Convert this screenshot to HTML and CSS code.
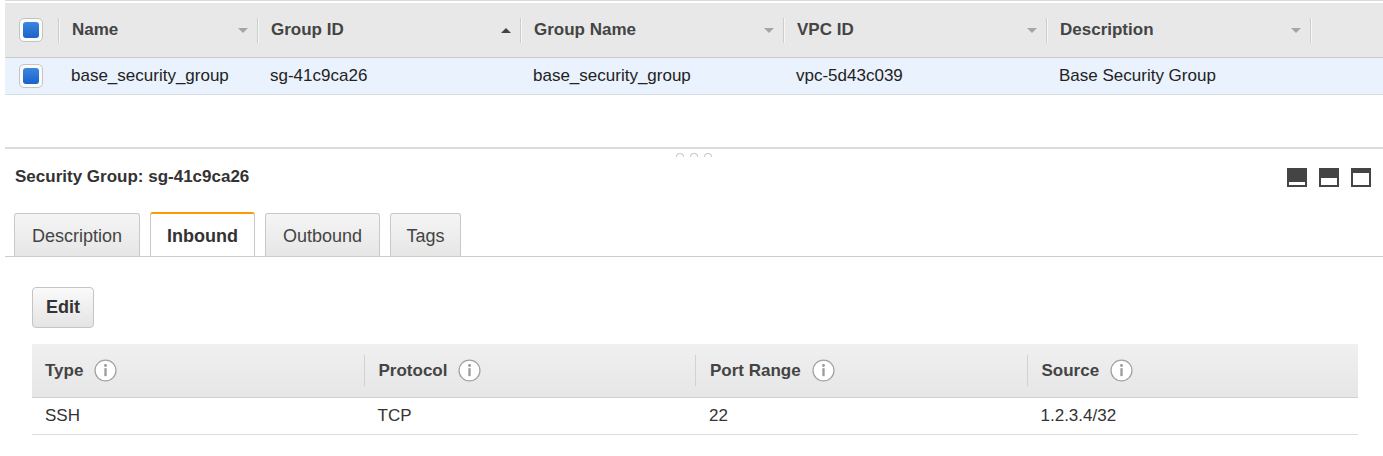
FILE: index.html
```html
<!DOCTYPE html>
<html lang="en">
<head>
    <meta charset="UTF-8">
    <title>Security Groups</title>
    <link rel="stylesheet" href="styles.css">
</head>
<body>
<div class="page">
    <div class="list">
        <div class="list-head">
            <div class="cell-check"><span class="check"><span class="check-in"></span></span></div>
            <div class="hcell"><div class="hcell-in"><span>Name</span><span class="arr-down"></span></div></div>
            <div class="hcell"><div class="hcell-in"><span>Group ID</span><span class="arr-up"></span></div></div>
            <div class="hcell"><div class="hcell-in"><span>Group Name</span><span class="arr-down"></span></div></div>
            <div class="hcell"><div class="hcell-in"><span>VPC ID</span><span class="arr-down"></span></div></div>
            <div class="hcell"><div class="hcell-in"><span>Description</span><span class="arr-down"></span></div></div>
            <div class="hcell"><div class="hcell-in"></div></div>
        </div>
        <div class="list-row">
            <div class="cell-check"><span class="check"><span class="check-in"></span></span></div>
            <div class="rcell">base_security_group</div>
            <div class="rcell">sg-41c9ca26</div>
            <div class="rcell">base_security_group</div>
            <div class="rcell">vpc-5d43c039</div>
            <div class="rcell">Base Security Group</div>
            <div class="rcell"></div>
        </div>
    </div>

    <div class="splitter">
        <span class="dot"></span><span class="dot"></span><span class="dot"></span>
    </div>

    <div class="pane-head">
        <span class="pane-title">Security Group: sg-41c9ca26</span>
        <div class="pane-icons">
            <svg width="20" height="19" viewBox="0 0 20 19"><rect width="20" height="19" fill="#444"/><rect x="2" y="14" width="16" height="3" fill="#fff"/></svg>
            <svg width="20" height="19" viewBox="0 0 20 19"><rect width="20" height="19" fill="#444"/><rect x="2" y="10" width="16" height="7" fill="#fff"/></svg>
            <svg width="20" height="19" viewBox="0 0 20 19"><rect width="20" height="19" fill="#444"/><rect x="2" y="5" width="16" height="12" fill="#fff"/></svg>
        </div>
    </div>

    <div class="tabs">
        <div class="tab tab-desc">Description</div>
        <div class="tab tab-in active">Inbound</div>
        <div class="tab tab-out">Outbound</div>
        <div class="tab tab-tags">Tags</div>
    </div>

    <div class="inbound">
        <button class="btn-edit">Edit</button>
        <table class="rules">
            <thead>
                <tr>
                    <th><div class="th-in first">Type <svg class="info" width="23" height="23" viewBox="0 0 22 22"><circle cx="11" cy="11" r="10" fill="#fff" stroke="#a3a3a3" stroke-width="1.2"/><circle cx="11" cy="6.3" r="1.4" fill="#9a9a9a"/><rect x="9.9" y="8.8" width="2.2" height="7.6" fill="#9a9a9a"/></svg></div></th>
                    <th><div class="th-in">Protocol <svg class="info" width="23" height="23" viewBox="0 0 22 22"><circle cx="11" cy="11" r="10" fill="#fff" stroke="#a3a3a3" stroke-width="1.2"/><circle cx="11" cy="6.3" r="1.4" fill="#9a9a9a"/><rect x="9.9" y="8.8" width="2.2" height="7.6" fill="#9a9a9a"/></svg></div></th>
                    <th><div class="th-in">Port Range <svg class="info" width="23" height="23" viewBox="0 0 22 22"><circle cx="11" cy="11" r="10" fill="#fff" stroke="#a3a3a3" stroke-width="1.2"/><circle cx="11" cy="6.3" r="1.4" fill="#9a9a9a"/><rect x="9.9" y="8.8" width="2.2" height="7.6" fill="#9a9a9a"/></svg></div></th>
                    <th><div class="th-in">Source <svg class="info" width="23" height="23" viewBox="0 0 22 22"><circle cx="11" cy="11" r="10" fill="#fff" stroke="#a3a3a3" stroke-width="1.2"/><circle cx="11" cy="6.3" r="1.4" fill="#9a9a9a"/><rect x="9.9" y="8.8" width="2.2" height="7.6" fill="#9a9a9a"/></svg></div></th>
                </tr>
            </thead>
            <tbody>
                <tr>
                    <td>SSH</td>
                    <td>TCP</td>
                    <td>22</td>
                    <td>1.2.3.4/32</td>
                </tr>
            </tbody>
        </table>
    </div>
</div>
</body>
</html>
```

FILE: styles.css
```css
body {
    margin: 0;
    font-family: "Liberation Sans", Arial, sans-serif;
    font-size: 17px;
    color: #222;
    background: #fff;
}
.page {
    padding-left: 5px;
}

/* top list */
.list {
    border-top: 1px solid #dadada;
    padding-top: 2px;
}
.list-head,
.list-row {
    display: grid;
    grid-template-columns: 53px 199px 263px 263px 263px 264px 1fr;
}
.list-head {
    height: 54px;
    background: #e8e8e8;
    border-bottom: 1px solid #cacaca;
}
.list-row {
    height: 36px;
    background: #eaf2fd;
    border-bottom: 1px solid #d9dee6;
}
.cell-check {
    display: flex;
    align-items: center;
    padding-left: 14px;
}
.check {
    width: 22px;
    height: 22px;
    border: 1px solid #c4c4c4;
    border-radius: 5px;
    background: #fafafa;
    display: flex;
    align-items: center;
    justify-content: center;
}
.check-in {
    width: 16px;
    height: 16px;
    border-radius: 3px;
    background: linear-gradient(#3a86e0, #1b62c9);
}
.hcell {
    display: flex;
    align-items: center;
}
.hcell-in {
    flex: 1;
    height: 25px;
    border-left: 1px solid #cdcdcd;
    box-shadow: inset 1px 0 0 #f6f6f6;
    display: flex;
    align-items: center;
    justify-content: space-between;
    padding: 0 9px 0 13px;
    font-weight: bold;
    color: #444;
}
.arr-down {
    width: 0;
    height: 0;
    border-left: 5px solid transparent;
    border-right: 5px solid transparent;
    border-top: 5px solid #a5a5a5;
}
.arr-up {
    width: 0;
    height: 0;
    border-left: 5px solid transparent;
    border-right: 5px solid transparent;
    border-bottom: 5px solid #444;
}
.rcell {
    display: flex;
    align-items: center;
    padding-left: 13px;
    color: #222;
}

/* split handle */
.splitter {
    margin-top: 52px;
    border-top: 2px solid #dcdcdc;
    height: 15px;
    display: flex;
    justify-content: center;
    gap: 6px;
    padding-top: 4px;
    box-sizing: border-box;
}
.dot {
    width: 6px;
    height: 3px;
    border: 1px solid #c8c8c8;
    border-bottom: none;
    border-radius: 4px 4px 0 0;
}

.pane-head {
    height: 30px;
    display: flex;
    align-items: center;
    justify-content: space-between;
    padding: 0 12px 0 10px;
}
.pane-title {
    font-weight: bold;
    color: #333;
}
.pane-icons {
    display: flex;
    gap: 12px;
}
.pane-icons svg {
    display: block;
}

/* tabs */
.tabs {
    margin-top: 20px;
    display: flex;
    gap: 10px;
    padding-left: 9px;
    border-bottom: 1px solid #cccccc;
}
.tab {
    height: 43px;
    box-sizing: border-box;
    border: 1px solid #c8c8c8;
    border-bottom: none;
    border-radius: 3px 3px 0 0;
    background: linear-gradient(#f5f5f5, #e6e6e6);
    display: flex;
    align-items: center;
    justify-content: center;
    font-size: 18px;
    color: #444;
    margin-top: 1px;
    padding-top: 2px;
}
.tab.active {
    background: #fff;
    border-top: 2px solid #ff9900;
    height: 44px;
    margin-top: 0;
    font-weight: bold;
    color: #333;
}
.tab-desc { width: 126px; }
.tab-in { width: 105px; }
.tab-out { width: 115px; }
.tab-tags { width: 71px; }

/* inbound rules */
.inbound {
    padding: 30px 25px 0 27px;
}
.btn-edit {
    display: block;
    width: 62px;
    height: 41px;
    border: 1px solid #c4c4c4;
    border-radius: 4px;
    background: linear-gradient(#fafafa, #e4e4e4);
    font-family: inherit;
    font-size: 18px;
    font-weight: bold;
    color: #333;
    padding: 0;
}
.rules {
    margin-top: 16px;
    width: 100%;
    border-collapse: collapse;
    table-layout: fixed;
}
.rules th {
    height: 53px;
    padding: 0;
    background: linear-gradient(#f0f0f0, #e6e6e6);
    border-bottom: 1px solid #cfcfcf;
    text-align: left;
}
.th-in {
    height: 31px;
    display: flex;
    align-items: center;
    gap: 11px;
    padding-left: 14px;
    border-left: 1px solid #d2d2d2;
    font-weight: bold;
    color: #444;
}
.th-in.first {
    border-left: none;
    padding-left: 13px;
}
.info {
    display: block;
}
.rules td {
    height: 36px;
    padding: 0 0 0 14px;
    border-bottom: 1px solid #dcdcdc;
    color: #333;
}
.rules td:first-child {
    padding-left: 13px;
}
```
